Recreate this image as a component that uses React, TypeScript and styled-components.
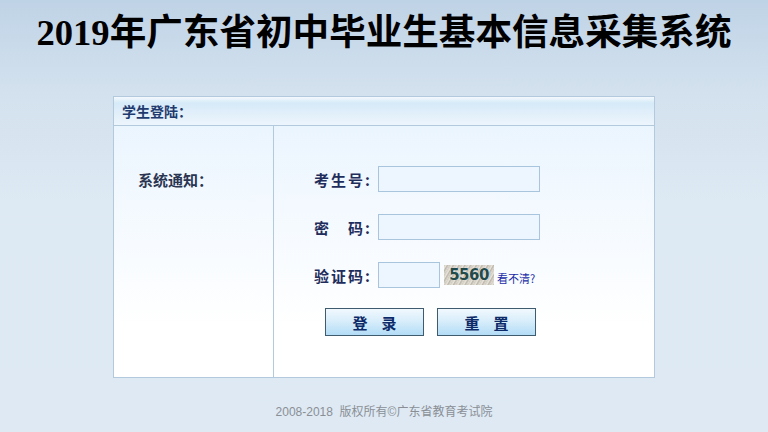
import styled, { createGlobalStyle } from "styled-components";

const GlobalStyle = createGlobalStyle`
  html, body {
    margin: 0;
    padding: 0;
    height: 100%;
  }
  body {
    background: linear-gradient(#bfd3e6 0px, #d3e1ee 90px, #dde9f3 200px, #dee9f3 432px);
    font-family: "Liberation Sans", "Noto Sans CJK SC", sans-serif;
  }
  #root {
    height: 100%;
  }
`;

const Page = styled.div`
  height: 432px;
  display: flex;
  flex-direction: column;
  align-items: center;
`;

const Title = styled.h1`
  margin: 11px 0 0;
  height: 44px;
  font-family: "Liberation Serif", "Noto Sans CJK SC", serif;
  font-size: 36.6px;
  font-weight: bold;
  line-height: 44px;
  color: #000;
`;

const Panel = styled.div`
  margin-top: 41px;
  width: 540px;
  border: 1px solid #b3c9de;
  background: #fff;
`;

const PanelHeader = styled.div`
  height: 28px;
  border-bottom: 1px solid #b3c9de;
  background: linear-gradient(#f4f9fd 0px, #d6eaf8 6px, #e3f0fa 18px, #edf5fc 28px);
  display: flex;
  align-items: center;
  padding-left: 8px;
  font-family: "Noto Sans CJK SC", sans-serif;
  font-size: 14px;
  font-weight: bold;
  color: #1f3a6e;
`;

const PanelBody = styled.div`
  height: 251px;
  display: grid;
  grid-template-columns: 160px 1fr;
`;

const NoticeCol = styled.div`
  border-right: 1px solid #b3c9de;
  background: linear-gradient(#ebf5fe 0px, #f7fbff 120px, #ffffff 200px);
  padding: 43px 0 0 24px;
  font-family: "Noto Sans CJK SC", sans-serif;
  font-size: 15px;
  font-weight: bold;
  color: #2a3552;
`;

const FormCol = styled.div`
  background: linear-gradient(#ebf5fe 0px, #f7fbff 120px, #ffffff 200px);
  padding: 40px 0 0 40px;
  display: flex;
  flex-direction: column;
`;

const Row = styled.div`
  display: flex;
  align-items: center;
  height: 26px;
  margin-bottom: 22px;
`;

const Label = styled.label`
  width: 58px;
  margin-right: 6px;
  font-family: "Noto Sans CJK SC", sans-serif;
  font-size: 15px;
  font-weight: bold;
  letter-spacing: 2px;
  color: #1f2d5c;
  white-space: pre;
  display: flex;
  justify-content: space-between;
`;

const Input = styled.input<{ $w: number }>`
  box-sizing: border-box;
  width: ${(p) => p.$w}px;
  height: 26px;
  border: 1px solid #a9c5de;
  background: #edf5fe;
  outline: none;
  padding: 0 3px;
  font-size: 14px;
`;

const Captcha = styled.span`
  margin-left: 4px;
  width: 50px;
  height: 20px;
  display: inline-flex;
  align-items: center;
  justify-content: center;
  background: repeating-linear-gradient(
      120deg,
      #cfcac0 0px,
      #e8e4dc 2px,
      #bdb7ab 3px,
      #e0dcd4 5px
    );
  font-family: "DejaVu Sans", sans-serif;
  font-size: 15px;
  font-weight: bold;
  color: #234a4a;
  letter-spacing: -0.5px;
  text-shadow: 0 0 1px #ffffff;
`;

const Refresh = styled.a`
  margin-left: 3px;
  margin-top: 6px;
  font-family: "Noto Sans CJK SC", sans-serif;
  font-size: 11px;
  color: #1a2ea8;
  text-decoration: none;
`;

const Buttons = styled.div`
  display: flex;
  gap: 13px;
  margin-left: 11px;
  margin-top: -2px;
`;

const Button = styled.button`
  width: 99px;
  height: 28px;
  border: 1px solid #3e5c6e;
  background: linear-gradient(#f1f8fd 0%, #d9eefb 45%, #b3dcf6 100%);
  font-family: "Noto Sans CJK SC", sans-serif;
  font-size: 15px;
  font-weight: bold;
  color: #0d2a68;
  letter-spacing: 14px;
  text-indent: 14px;
  padding: 0;
  cursor: pointer;
`;

const Footer = styled.div`
  margin-top: 24px;
  font-family: "Liberation Sans", "Noto Sans CJK SC", sans-serif;
  font-size: 12px;
  color: #8a8f96;
  white-space: pre;
`;

export default function App() {
  return (
    <>
      <GlobalStyle />
      <Page>
        <Title>2019年广东省初中毕业生基本信息采集系统</Title>
        <Panel>
          <PanelHeader>学生登陆：</PanelHeader>
          <PanelBody>
            <NoticeCol>系统通知：</NoticeCol>
            <FormCol>
              <Row>
                <Label>考生号:</Label>
                <Input $w={162} type="text" />
              </Row>
              <Row>
                <Label>
                  <span>密</span>
                  <span>码:</span>
                </Label>
                <Input $w={162} type="password" />
              </Row>
              <Row>
                <Label>验证码:</Label>
                <Input $w={62} type="text" />
                <Captcha>5560</Captcha>
                <Refresh href="#">看不清?</Refresh>
              </Row>
              <Buttons>
                <Button>登录</Button>
                <Button>重置</Button>
              </Buttons>
            </FormCol>
          </PanelBody>
        </Panel>
        <Footer>2008-2018  版权所有©广东省教育考试院</Footer>
      </Page>
    </>
  );
}
